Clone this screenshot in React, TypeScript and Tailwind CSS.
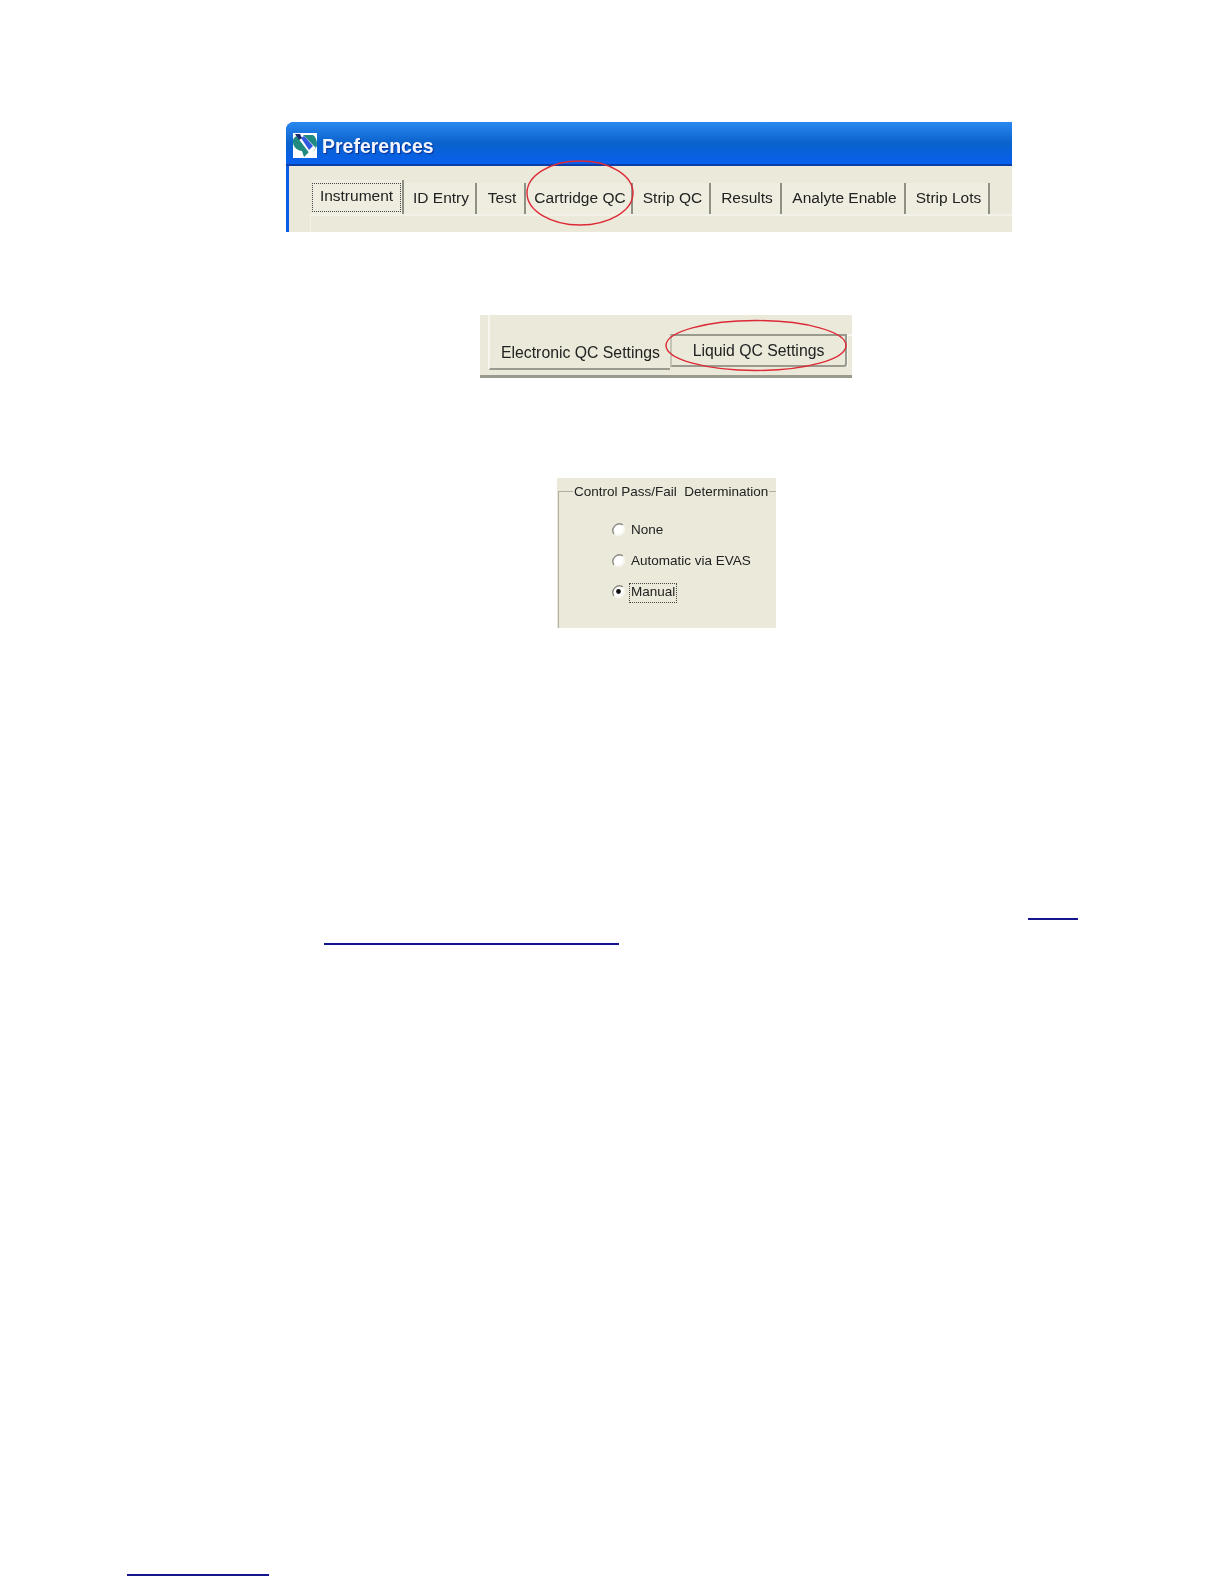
const tabs = [
  { label: 'ID Entry', width: 'w-[73px]' },
  { label: 'Test', width: 'w-[49px]' },
  { label: 'Cartridge QC', width: 'w-[107px]' },
  { label: 'Strip QC', width: 'w-[78px]' },
  { label: 'Results', width: 'w-[71px]' },
  { label: 'Analyte Enable', width: 'w-[124px]' },
  { label: 'Strip Lots', width: 'w-[84px]' },
];

function AppIcon() {
  return (
    <svg width="24" height="25" viewBox="0 0 24 25" className="shrink-0 blur-[0.3px]">
      <rect width="24" height="25" fill="#ffffff" />
      <path d="M0 7 C1 3 6 2 10 2 L20 2 C23 4 24 8 24 11 C24 16 20 19 16 19 L11 24 L9 18 C4 18 -1 13 0 7 Z" fill="#1f8a80" />
      <path d="M2 1 L8 0 L23 15 L17 21 Z" fill="#ffffff" />
      <path d="M8 5 L11 3 L20 13 L16 17 Z" fill="#2f58e0" />
      <path d="M2 1 L7 1 L9 5 L6 7 Z" fill="#1a2a6c" />
    </svg>
  );
}

function Radio({ checked }: { checked?: boolean }) {
  return (
    <svg width="15" height="15" viewBox="0 0 15 15" className="-mt-[2px] shrink-0 blur-[0.3px]">
      <circle cx="7.5" cy="7.5" r="6.5" fill="#ffffff" />
      <path d="M3 12 A6.5 6.5 0 0 1 12 3" fill="none" stroke="#8c8c80" strokeWidth="1.4" />
      <path d="M12 3 A6.5 6.5 0 0 1 3 12" fill="none" stroke="#f4f3ea" strokeWidth="1.4" />
      {checked && <circle cx="7.5" cy="7.5" r="2.4" fill="#111111" />}
    </svg>
  );
}

function RadioRow({ label, checked }: { label: string; checked?: boolean }) {
  return (
    <div className="flex h-[31px] items-center gap-[5px]">
      <Radio checked={checked} />
      {checked ? (
        <span className="-ml-[2px] flex h-[20px] w-[48px] items-center border border-dotted border-[#444444] pl-[1px]">{label}</span>
      ) : (
        <span>{label}</span>
      )}
    </div>
  );
}

function RedEllipse({ className, rx, ry }: { className: string; rx: number; ry: number }) {
  return (
    <svg className={className} viewBox={`0 0 ${rx * 2 + 2} ${ry * 2 + 2}`} fill="none">
      <ellipse cx={rx + 1} cy={ry + 1} rx={rx} ry={ry} stroke="#dc2a36" strokeWidth="1.4" />
    </svg>
  );
}

export default function App() {
  return (
    <div className="flex h-[1584px] w-[1224px] flex-col overflow-hidden bg-white pt-[122px] font-['Liberation_Sans',Arial,sans-serif] text-[#222222]">
      {/* preferences window */}
      <div className="relative ml-[286px] flex h-[110px] w-[726px] flex-col overflow-hidden rounded-tl-[8px] bg-[#0a5ce6]">
        <div className="flex h-[44px] items-center gap-[5px] border-b-2 border-[#0a3fa8] bg-gradient-to-b from-[#2a88f0] via-[#0a62cc] to-[#0a60ee] pl-[7px] pt-[4px]">
          <AppIcon />
          <span className="mt-[4px] text-[19.5px] font-bold leading-none text-[#f2f6ff] [text-shadow:1px_1px_1px_#0a2f90] blur-[0.3px]">Preferences</span>
        </div>
        <div className="ml-[3px] flex min-h-0 flex-1 flex-col bg-[#ebe9da] pl-[23px] pt-[14px]">
          <div className="flex h-[34px] items-end text-[15.5px] blur-[0.3px]">
            <div className="flex h-[34px] w-[92px] border-r-2 border-[#8f8f84] bg-[#efeddf] pt-[3px]">
              <div className="flex h-[29px] w-[89px] items-center justify-center border border-dotted border-[#444444] pb-[3px]">Instrument</div>
            </div>
            {tabs.map((tab) => (
              <div
                key={tab.label}
                className={`flex h-[31px] items-center justify-center border-r-2 border-[#8f8f84] bg-[#efeddf] pb-[1px] pl-[3px] ${tab.width}`}
              >
                {tab.label}
              </div>
            ))}
          </div>
          <div className="-ml-[2px] flex-1 border-l border-t-2 border-[#f3f2e8] bg-[#ebe9da]" />
        </div>
        <RedEllipse className="absolute left-[240px] top-[38px] h-[66px] w-[108px]" rx={53} ry={32} />
      </div>

      {/* QC settings tabs */}
      <div className="relative ml-[480px] mt-[83px] flex h-[63px] w-[372px] flex-col bg-[#ebe9da] text-[15.8px]">
        <div className="flex h-[55px] items-end pl-[8px] blur-[0.3px]">
          <div className="flex h-[55px] w-[182px] items-end rounded-bl-[3px] border-b-2 border-l-2 border-b-[#9a9a8e] border-l-[#f7f6ee] pb-[3px] pl-[11px]">
            Electronic QC Settings
          </div>
          <div className="mb-[3px] flex h-[33px] w-[177px] items-center justify-center rounded-br-[3px] border-2 border-[#9a9a8e] border-l-[#c4c4b6]">
            Liquid QC Settings
          </div>
          <div className="mb-[3px] h-[33px] w-[5px] border-l border-t-2 border-[#f7f6ee]" />
        </div>
        <div className="mt-auto h-[3px] bg-[#9a9a8e]" />
        <RedEllipse className="absolute left-[185px] top-[4px] h-[53px] w-[182px]" rx={90} ry={25} />
      </div>

      {/* pass/fail group box */}
      <div className="ml-[557px] mt-[100px] flex h-[150px] w-[219px] flex-col bg-[#ebe9da] pl-[1px] pt-[13px] text-[13.5px]">
        <div className="flex-1 border-l border-t border-[#b0b0a2] blur-[0.25px]">
          <div className="-mt-[10px] ml-[14px] w-fit whitespace-pre bg-[#ebe9da] px-px leading-[20px]">Control Pass/Fail  Determination</div>
          <div className="ml-[52px] mt-[13px] flex flex-col">
            <RadioRow label="None" />
            <RadioRow label="Automatic via EVAS" />
            <RadioRow label="Manual" checked />
          </div>
        </div>
      </div>

      {/* link underlines, their text is blank in the source */}
      <div className="ml-[1028px] mt-[290px] h-[2px] w-[50px] bg-[#14148c]" />
      <div className="ml-[324px] mt-[23px] h-[2px] w-[295px] bg-[#14148c]" />
      <div className="ml-[127px] mt-[629px] h-[2px] w-[142px] bg-[#14148c]" />
    </div>
  );
}
